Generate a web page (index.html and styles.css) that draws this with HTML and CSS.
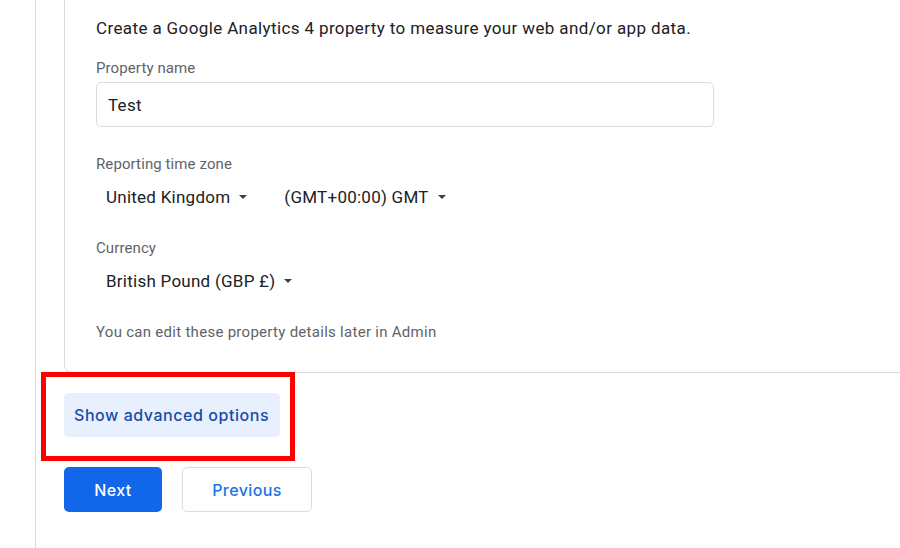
FILE: index.html
```html
<!DOCTYPE html>
<html>
<head>
<meta charset="utf-8">
<link rel="stylesheet" href="styles.css">
</head>
<body>
<div class="page">
  <div class="gutter"></div>
  <div class="main">
    <div class="card">
      <p class="intro">Create a Google Analytics 4 property to measure your web and/or app data.</p>
      <div class="field field-name">
        <div class="label">Property name</div>
        <div class="input">Test</div>
      </div>
      <div class="field">
        <div class="label">Reporting time zone</div>
        <div class="selects">
          <div class="select sel-country">United Kingdom <span class="caret"></span></div>
          <div class="select">(GMT+00:00) GMT <span class="caret"></span></div>
        </div>
      </div>
      <div class="field">
        <div class="label">Currency</div>
        <div class="selects">
          <div class="select">British Pound (GBP £) <span class="caret"></span></div>
        </div>
      </div>
      <p class="note">You can edit these property details later in Admin</p>
    </div>
    <div class="advanced-row">
      <button class="btn-advanced">Show advanced options</button>
      <div class="highlight"></div>
    </div>
    <div class="actions">
      <button class="btn-next">Next</button>
      <button class="btn-prev">Previous</button>
    </div>
  </div>
</div>
</body>
</html>
```
FILE: styles.css
```css
html, body {
  margin: 0;
  padding: 0;
  background: #ffffff;
}
body {
  font-family: Roboto, "Liberation Sans", sans-serif;
  color: #3c4043;
  width: 900px;
  height: 548px;
  overflow: hidden;
}
.page {
  display: flex;
  height: 548px;
}
.gutter {
  width: 35px;
  border-right: 1px solid #dadce0;
  flex: none;
}
.main {
  flex: 1;
  padding-left: 28px;
}
.card {
  border-left: 1px solid #dadce0;
  border-bottom: 1px solid #dadce0;
  border-bottom-left-radius: 8px;
  padding: 16px 0 0 31px;
  height: 356px;
}
.intro {
  margin: 0;
  font-size: 17px;
  line-height: 24px;
  letter-spacing: 0.38px;
  color: #202124;
}
.field {
  margin-top: 27px;
}
.field-name {
  margin-top: 18px;
}
.label {
  font-size: 15px;
  line-height: 20px;
  color: #5f6368;
  letter-spacing: 0.1px;
}
.input {
  margin-top: 4px;
  width: 618px;
  height: 45px;
  border: 1px solid #dadce0;
  border-radius: 5px;
  box-sizing: border-box;
  padding-left: 11px;
  font-size: 17px;
  line-height: 45px;
  color: #202124;
  letter-spacing: 0.3px;
}
.selects {
  display: flex;
  margin-top: 1px;
  height: 44px;
  align-items: center;
  padding-left: 10px;
  margin-bottom: -8px;
}
.select {
  font-size: 17px;
  color: #202124;
  display: flex;
  align-items: center;
  letter-spacing: 0.25px;
}
.sel-country {
  margin-right: 37px;
}
.caret {
  display: inline-block;
  width: 0;
  height: 0;
  border-left: 4px solid transparent;
  border-right: 4px solid transparent;
  border-top: 4px solid #3c4043;
  margin-left: 9px;
}
.note {
  margin: 27px 0 0;
  font-size: 15px;
  line-height: 20px;
  color: #5f6368;
  letter-spacing: 0.28px;
}
.advanced-row {
  position: relative;
  margin-top: 20px;
  height: 44px;
}
.btn-advanced {
  height: 44px;
  padding: 0 10px;
  width: 216px;
  border: none;
  border-radius: 5px;
  background: #e8f0fe;
  color: #1a4ba6;
  font-family: Inter, Roboto, sans-serif;
  font-size: 16px;
  font-weight: 500;
  letter-spacing: 0.55px;
  text-align: left;
  white-space: nowrap;
}
.highlight {
  position: absolute;
  left: -23px;
  top: -21px;
  width: 244px;
  height: 79px;
  border: 5px solid #ff0000;
  pointer-events: none;
}
.actions {
  display: flex;
  gap: 20px;
  margin-top: 30px;
}
.btn-next, .btn-prev {
  height: 45px;
  border-radius: 5px;
  font-family: Inter, Roboto, sans-serif;
  font-size: 16px;
  font-weight: 500;
  letter-spacing: 0.4px;
}
.btn-next {
  width: 98px;
  border: none;
  background: #1166e9;
  color: #ffffff;
}
.btn-prev {
  width: 130px;
  border: 1px solid #dadce0;
  background: #ffffff;
  color: #1a73e8;
}
```
